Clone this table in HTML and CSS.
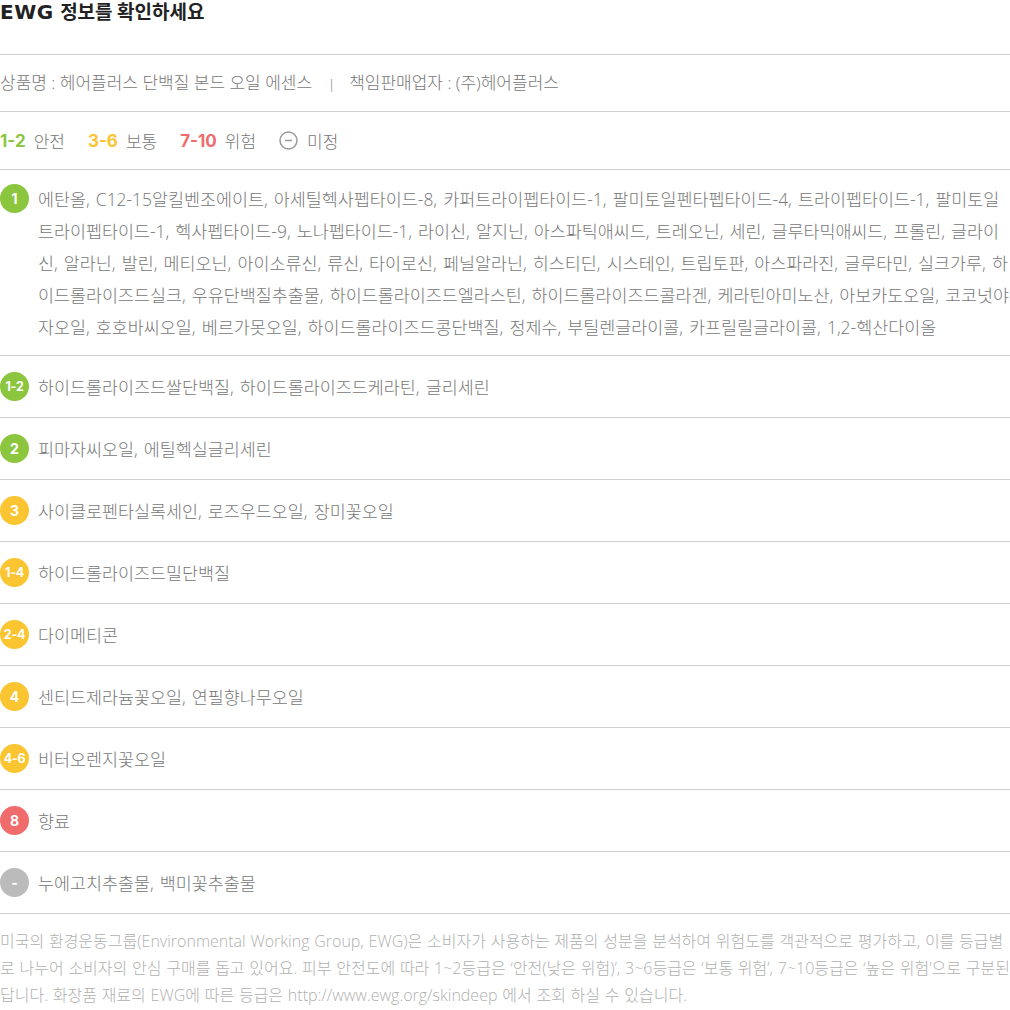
FILE: index.html
```html
<!DOCTYPE html>
<html lang="ko">
<head>
  <meta charset="UTF-8" />
  <title>EWG 정보</title>
  <link rel="stylesheet" href="styles.css">
</head>
<body>
  <div class="ewg">
    <h2 class="ewg-title"><span class="ewg-logo">EWG</span> 정보를 확인하세요</h2>

    <div class="product-info">
      상품명 : 헤어플러스 단백질 본드 오일 에센스<span class="sep">|</span>책임판매업자 : (주)헤어플러스
    </div>

    <div class="legend">
      <span class="num green">1-2</span><span class="lbl">안전</span>
      <span class="num yellow">3-6</span><span class="lbl">보통</span>
      <span class="num red">7-10</span><span class="lbl">위험</span>
      <svg class="minus" width="19" height="19" viewBox="0 0 19 19"><circle cx="9.5" cy="9.5" r="8.5" fill="none" stroke="#999" stroke-width="1.5"/><line x1="6" y1="9.5" x2="13" y2="9.5" stroke="#999" stroke-width="1.5"/></svg><span class="lbl">미정</span>
    </div>

    <ul class="ing-list">
      <li class="ing multi">
        <span class="badge green">1</span>
        <p>에탄올, C12-15알킬벤조에이트, 아세틸헥사펩타이드-8, 카퍼트라이펩타이드-1, 팔미토일펜타펩타이드-4, 트라이펩타이드-1, 팔미토일트라이펩타이드-1, 헥사펩타이드-9, 노나펩타이드-1, 라이신, 알지닌, 아스파틱애씨드, 트레오닌, 세린, 글루타믹애씨드, 프롤린, 글라이신, 알라닌, 발린, 메티오닌, 아이소류신, 류신, 타이로신, 페닐알라닌, 히스티딘, 시스테인, 트립토판, 아스파라진, 글루타민, 실크가루, 하이드롤라이즈드실크, 우유단백질추출물, 하이드롤라이즈드엘라스틴, 하이드롤라이즈드콜라겐, 케라틴아미노산, 아보카도오일, 코코넛야자오일, 호호바씨오일, 베르가못오일, 하이드롤라이즈드콩단백질, 정제수, 부틸렌글라이콜, 카프릴릴글라이콜, 1,2-헥산다이올</p>
      </li>
      <li class="ing"><span class="badge green small">1-2</span><p>하이드롤라이즈드쌀단백질, 하이드롤라이즈드케라틴, 글리세린</p></li>
      <li class="ing"><span class="badge green">2</span><p>피마자씨오일, 에틸헥실글리세린</p></li>
      <li class="ing"><span class="badge yellow">3</span><p>사이클로펜타실록세인, 로즈우드오일, 장미꽃오일</p></li>
      <li class="ing"><span class="badge yellow small">1-4</span><p>하이드롤라이즈드밀단백질</p></li>
      <li class="ing"><span class="badge yellow small">2-4</span><p>다이메티콘</p></li>
      <li class="ing"><span class="badge yellow">4</span><p>센티드제라늄꽃오일, 연필향나무오일</p></li>
      <li class="ing"><span class="badge yellow small">4-6</span><p>비터오렌지꽃오일</p></li>
      <li class="ing"><span class="badge red">8</span><p>향료</p></li>
      <li class="ing"><span class="badge gray">-</span><p>누에고치추출물, 백미꽃추출물</p></li>
    </ul>

    <p class="ewg-note">미국의 환경운동그룹(Environmental Working Group, EWG)은 소비자가 사용하는 제품의 성분을 분석하여 위험도를 객관적으로 평가하고, 이를 등급별로 나누어 소비자의 안심 구매를 돕고 있어요. 피부 안전도에 따라 1~2등급은 ‘안전(낮은 위험)’, 3~6등급은 ‘보통 위험’, 7~10등급은 ‘높은 위험’으로 구분된답니다. 화장품 재료의 EWG에 따른 등급은 http://www.ewg.org/skindeep 에서 조회 하실 수 있습니다.</p>
  </div>
</body>
</html>
```

FILE: styles.css
```css
body {
  margin: 0;
  padding: 0;
  background: #ffffff;
  font-family: "Open Sans", "Noto Sans CJK KR", sans-serif;
}

.ewg {
  width: 1010px;
}

.ewg-title {
  margin: 0;
  height: 54px;
  line-height: 24px;
  font-family: "Inter", "Noto Sans CJK KR", sans-serif;
  font-size: 19px;
  font-weight: 700;
  color: #222;
  border-bottom: 1px solid #cfcfcf;
}

.ewg-logo {
  font-family: "DejaVu Sans", sans-serif;
  font-size: 20px;
  letter-spacing: 0.5px;
  margin-right: 2px;
}

.product-info {
  height: 56px;
  line-height: 56px;
  font-size: 17px;
  color: #777;
  border-bottom: 1px solid #cfcfcf;
  font-weight: 300;
}

.product-info .sep {
  margin: 0 14px 0 16px;
  font-size: 13px;
  color: #777;
}

.legend {
  display: flex;
  align-items: center;
  height: 57px;
  border-bottom: 1px solid #cfcfcf;
  font-size: 17px;
}

.legend .num {
  font-family: "Inter", "Noto Sans", sans-serif;
  font-weight: 700;
  font-size: 17px;
  margin-right: 8px;
}

.legend .lbl {
  color: #777;
  font-weight: 300;
  margin-right: 23px;
}

.legend .minus {
  margin-right: 9px;
}

.green { color: #8cc63f; }
.yellow { color: #fbc531; }
.red { color: #f06b6b; }

.ing-list {
  list-style: none;
  margin: 0;
  padding: 0;
}

.ing {
  display: flex;
  align-items: center;
  height: 61px;
  border-bottom: 1px solid #cfcfcf;
}

.ing.multi {
  align-items: flex-start;
  height: auto;
  padding: 13px 0 12px;
}

.ing p {
  margin: 0;
  font-size: 17.4px;
  word-spacing: 1.6px;
  line-height: 32px;
  color: #777;
  font-weight: 300;
}

.badge {
  flex: none;
  width: 29px;
  height: 29px;
  border-radius: 50%;
  margin-right: 9px;
  display: flex;
  align-items: center;
  justify-content: center;
  color: #fff;
  font-family: "Inter", "Noto Sans", sans-serif;
  font-weight: 700;
  font-size: 14px;
}

.ing.multi .badge {
  margin-top: 1px;
}

.badge.small {
  font-size: 12.5px;
  letter-spacing: -0.3px;
}

.badge.green { background: #8cc63f; color: #fff; }
.badge.yellow { background: #fbc531; color: #fff; }
.badge.red { background: #f06b6b; color: #fff; }
.badge.gray { background: #bbbbbb; color: #fff; }

.ewg-note {
  margin: 0;
  padding-top: 14px;
  font-size: 16px;
  word-spacing: 0.6px;
  line-height: 27px;
  color: #b0b0b0;
  font-weight: 300;
}
```
